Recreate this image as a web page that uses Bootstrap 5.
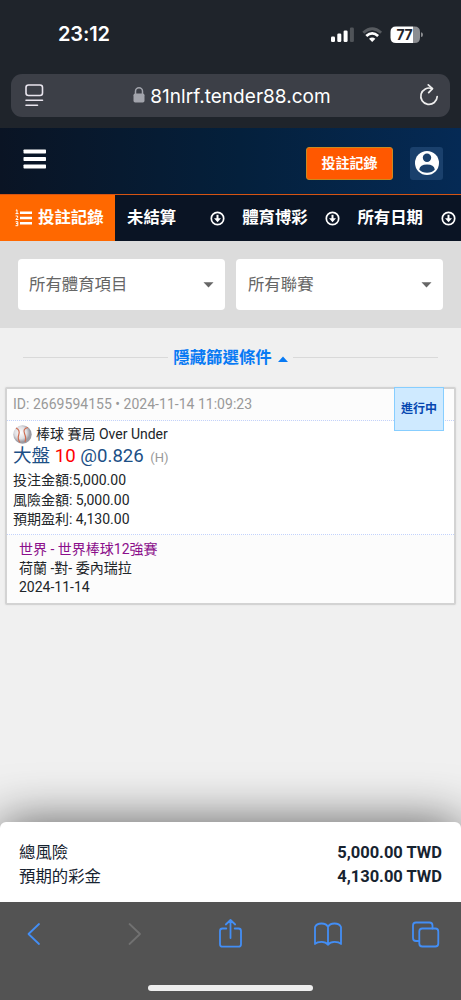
<!DOCTYPE html>
<html lang="zh-Hant">
<head>
<meta charset="utf-8">
<meta name="viewport" content="width=device-width, initial-scale=1">
<title>投註記錄</title>
<link rel="stylesheet" href="https://cdn.jsdelivr.net/npm/bootstrap@5.3.0/dist/css/bootstrap.min.css">
<style>
body{font-family:Roboto,"Noto Sans CJK TC",sans-serif;background:#f0f0f0;width:461px;height:1000px;overflow:hidden;color:#212529}
svg{display:block;flex:none}
.browser-top{height:128px;background:#1f242b;font-family:Inter,sans-serif;color:#fff}
.status-row{height:74px;padding:4px 37px 11px 58px}
.clock{font-size:20px;font-weight:600;letter-spacing:-.1px}
.address{margin:0 11px;height:43px;border-radius:11px;background:#3c3f47;padding:0 11px 0 14px}
.url{font-size:19px;letter-spacing:.03px;line-height:43px;margin-left:5px;padding-top:1px}
.app-head{height:66px;background:linear-gradient(90deg,#0a1424,#04203c 52%,#052a55);padding:0 18px 0 23px}
.btn-record{width:87px;height:33px;margin-top:4px;background:#ff5800;border:1px solid #c98a20;border-radius:3px;color:#fff;font-size:14px;font-weight:700;padding:0;line-height:31px}
.user-box{width:33px;height:33px;background:#1a406c;border-radius:3px;margin:4px 0 0 17px}
.tabs-bar{height:47px;background:#0a1424;border-top:1.5px solid #d55413;color:#fff;font-size:16.4px;font-weight:700;line-height:44px}
.tab-on{width:115px;background:#ff6800;padding-left:15px}
.tab-item{width:115.2px;padding:0 5px 0 12px}
.filters{height:87px;background:#dcdcdc;padding:18px 18px 0;gap:11px}
.filter{height:51px;border-radius:4px;background:#fff;font-size:16.4px;color:#666;padding:0 11px 0 11px;line-height:50px}
.filter + .filter{padding-left:12px}
.toggle-row{height:59px;padding:0 23px;color:#087af4;font-size:16.4px;font-weight:700;line-height:59px}
.rule{height:1px;background:#d9d9d9}
.ticket{margin:0 5px 0 5px;height:218px;border:2px solid #d3d3d3;border-radius:2px;background:#fff;font-size:14px;box-shadow:0 0 2px #ddd}
.ticket-id{height:32px;line-height:31px;padding-left:6px;background:#fcfcfc;border-bottom:1px dotted #c3d2fb;color:#999;letter-spacing:.02px}
.state{right:10px;top:-2px;width:50px;height:44px;background:#cfeaff;border:1px solid #87ceff;color:#0646b0;font-size:12px;font-weight:700;line-height:42px}
.bet{height:114px;padding:4px 0 0 6px;border-bottom:1px dotted #c3d2fb}
.ln{line-height:19px;height:19px;white-space:nowrap}
.odds{font-size:18.6px;line-height:25px;height:25px;color:#1c4f86}
.league{padding:5px 0 0 12px;height:68px;background:#fcfcfc}
.purple{color:#8b0f8b}
.gap-zone{height:217px}
.totals{height:80px;background:#fff;border-radius:6px 6px 0 0;box-shadow:0 0 50px rgba(0,0,0,.62);padding:19px 19px 0;color:#172330;font-size:16.4px;line-height:23.5px}
.totals b{font-size:16.5px}
.toolbar{height:98px;background:#535353}
.home-bar{width:165px;height:6px;border-radius:3px;background:#eee;margin:19px auto 0}
</style>
<script src="https://cdn.jsdelivr.net/npm/bootstrap@5.3.0/dist/js/bootstrap.bundle.min.js"></script>
</head>
<body>
<header class="browser-top">
 <div class="status-row d-flex align-items-center">
  <span class="clock me-auto">23:12</span>
  <svg width="96" height="20" viewBox="0 0 96 20"><g fill="#fff"><rect x="3" y="12.5" width="4" height="5.5" rx="1.3"/><rect x="9.3" y="9.5" width="4" height="8.5" rx="1.3"/><rect x="15.6" y="6.5" width="4" height="11.5" rx="1.3"/><rect x="21.9" y="3.5" width="4" height="14.5" rx="1.3" opacity=".22"/></g>
  <g fill="none" stroke="#fff" stroke-width="2.8"><path opacity=".25" d="M35.3 8.7Q44.2 .7 53.1 8.7"/><path d="M38.3 12Q44.2 6.7 50.1 12"/></g><path fill="#fff" d="M41 14.7Q44.2 12.1 47.4 14.7L44.2 18Z"/>
  <path fill="#fff" d="M68 2.5h17v16.5H68q-5.5 0-5.5-5.5V8q0-5.5 5.500-5.500z"/><path fill="#8b8d91" d="M85 2.500h1.500q5.500 0 5.500 5.500v5.500q0 5.500-5.500 5.500H85z"/><path fill="#8b8d91" d="M93 8.300q2 .3 2 2.400t-2 2.400z"/><text x="68.500" y="15.800" font-size="14" font-weight="700" letter-spacing="-.4" fill="#1f242b" font-family="Inter">77</text></svg>
 </div>
 <div class="address d-flex align-items-center">
  <svg width="20" height="24" viewBox="0 0 20 24" fill="none" stroke="#e9e5ee" stroke-width="1.600" stroke-linecap="round"><rect x="1" y="1" width="16.500" height="10.500" rx="2.500"/><path d="M1 16.200h16.500M1 21.200h11.500"/></svg>
  <svg class="ms-auto" width="12" height="17" viewBox="0 0 12 17"><path fill="none" stroke="#a2a4ac" stroke-width="1.500" d="M2.500 8V4.300a3.500 3.500 0 0 1 7 0V8"/><rect x=".5" y="6.500" width="11" height="9" rx="1.700" fill="#a2a4ac"/></svg>
  <span class="url me-auto">81nlrf.tender88.com</span>
  <svg width="20" height="24" viewBox="0 0 20 24" fill="none" stroke="#eee" stroke-width="1.700" stroke-linecap="round" stroke-linejoin="round"><path d="M18.200 12.500A8.200 8.200 0 1 1 13 4.600"/><path d="M9.300 .900L13.500 4.600 9.700 8.700"/></svg>
 </div>
</header>
<div class="app-head d-flex align-items-center">
 <svg class="me-auto" style="margin-top:-4px" width="24" height="20" viewBox="0 0 24 20" fill="#fff"><rect x=".5" y=".5" width="22.500" height="4" rx=".7"/><rect x=".5" y="8" width="22.500" height="4" rx=".7"/><rect x=".5" y="15.500" width="22.500" height="4" rx=".7"/></svg>
 <button class="btn btn-record">投註記錄</button>
 <span class="user-box d-flex align-items-center justify-content-center"><svg width="24" height="24" viewBox="0 0 24 24"><circle cx="12" cy="12" r="12" fill="#fff"/><circle cx="12" cy="6.800" r="4.200" fill="#1a406c"/><path fill="#1a406c" d="M4.200 18.400Q5 13.400 12 13.400T19.800 18.400Q17 21.700 12 21.700T4.200 18.400z"/></svg></span>
</div>
<nav class="tabs-bar d-flex text-nowrap">
 <div class="tab-on d-flex align-items-center"><svg width="18" height="18" viewBox="0 0 18 18" fill="#fff"><path d="M5 2.500h12v2.400H5zM5 7.800h12v2.400H5zM5 13.100h12v2.400H5z"/><g fill="none" stroke="#fff" stroke-width="1"><path d="M.8 1.500l1.200-.7v4M.5 4.600h3M.6 7h2v1.500l-1.700 2h2.500M.6 12.700h2.200v4H.5M1 14.600h1.800"/></g></svg><span style="margin-left:5px">投註記錄</span></div>
 <div class="tab-item d-flex align-items-center justify-content-between"><span>未結算</span><svg width="15" height="15" viewBox="0 0 15 15" fill="none" stroke="#fff" stroke-width="1.700"><circle cx="7.500" cy="7.500" r="6.200"/><path d="M7.500 3.800v5.200" stroke-width="2"/><path fill="#fff" stroke="none" d="M4 7.300h7L7.500 11.200z"/></svg></div>
 <div class="tab-item d-flex align-items-center justify-content-between"><span>體育博彩</span><svg width="15" height="15" viewBox="0 0 15 15" fill="none" stroke="#fff" stroke-width="1.700"><circle cx="7.500" cy="7.500" r="6.200"/><path d="M7.500 3.800v5.200" stroke-width="2"/><path fill="#fff" stroke="none" d="M4 7.300h7L7.500 11.200z"/></svg></div>
 <div class="tab-item d-flex align-items-center justify-content-between"><span>所有日期</span><svg width="15" height="15" viewBox="0 0 15 15" fill="none" stroke="#fff" stroke-width="1.700"><circle cx="7.500" cy="7.500" r="6.200"/><path d="M7.500 3.800v5.200" stroke-width="2"/><path fill="#fff" stroke="none" d="M4 7.300h7L7.500 11.200z"/></svg></div>
</nav>
<section class="filters d-flex">
 <div class="filter flex-fill w-50 d-flex align-items-center justify-content-between"><span>所有體育項目</span><svg width="11" height="6" viewBox="0 0 11 6"><path fill="#666" d="M.5.200h10L5.500 5.500z"/></svg></div>
 <div class="filter flex-fill w-50 d-flex align-items-center justify-content-between"><span>所有聯賽</span><svg width="11" height="6" viewBox="0 0 11 6"><path fill="#666" d="M.5.200h10L5.500 5.500z"/></svg></div>
</section>
<div class="toggle-row d-flex align-items-center">
 <span class="rule flex-fill"></span><span style="margin-left:5px">隱藏篩選條件</span><svg style="margin:2px 5px 0 6px" width="10" height="6" viewBox="0 0 10 6"><path fill="#087af4" d="M0 6h10L5 .500z"/></svg><span class="rule flex-fill"></span>
</div>
<article class="ticket position-relative">
 <div class="ticket-id">ID: 2669594155 • 2024-11-14 11:09:23</div>
 <div class="state position-absolute text-center">進行中</div>
 <div class="bet">
  <div class="ln d-flex align-items-center"><svg class="me-1" width="19" height="19" viewBox="0 0 19 19"><defs><radialGradient id="ball" cx=".4" cy=".4"><stop offset="0" stop-color="#fff"/><stop offset=".65" stop-color="#dedee2"/><stop offset="1" stop-color="#9c9ca4"/></radialGradient></defs><circle cx="9.500" cy="9.500" r="9.200" fill="url(#ball)"/><path fill="none" stroke="#cf6d52" stroke-width="1.200" d="M3 3Q7.300 5 5.800 9.500T7 17.500M15 2.500Q9.500 3.500 11.500 8.500T12 17"/></svg><span>棒球 賽局 Over Under</span></div>
  <div class="odds">大盤 <span style="color:#f00">10</span> @0.826 <small style="font-size:13px;color:#999;margin-left:2px">(H)</small></div>
  <div class="ln" style="height:22px;line-height:22px">投注金額:5,000.00</div>
  <div class="ln">風險金額: 5,000.00</div>
  <div class="ln">預期盈利: 4,130.00</div>
 </div>
 <div class="league">
  <div class="ln purple">世界 - 世界棒球12強賽</div>
  <div class="ln">荷蘭 -對- 委內瑞拉</div>
  <div class="ln">2024-11-14</div>
 </div>
</article>
<div class="gap-zone"></div>
<section class="totals">
 <div class="d-flex justify-content-between"><span>總風險</span><b>5,000.00 TWD</b></div>
 <div class="d-flex justify-content-between"><span>預期的彩金</span><b>4,130.00 TWD</b></div>
</section>
<footer class="toolbar position-relative pt-3">
 <svg width="461" height="48" viewBox="0 0 461 48" fill="none" stroke="#438ef5" stroke-width="1.800" stroke-linecap="round" stroke-linejoin="round">
  <path d="M39 6L28.500 16 39 26"/><path stroke="#717171" d="M129.500 6L140 16 129.500 26"/>
  <path d="M226.300 10.500h-3.800q-2.500 0-2.500 2.500v13.200q0 2.500 2.500 2.500h16q2.500 0 2.500-2.500V13q0-2.500-2.500-2.500h-3.800M230.500 20V2.500M225.800 6.500l4.700-4.500 4.700 4.500"/>
  <path d="M328 9v17.700M328 9Q326.500 5.500 321.500 5.500T315 9V26Q317 23.800 321.500 23.800T328 26.700Q330 23.800 334.500 23.800T341 26V9Q339.500 5.500 334.500 5.500T328 9"/>
  <path d="M419.300 23H416q-3 0-3-3V7.500q0-3 3-3h13.500q3 0 3 3v3"/><rect x="419.300" y="10.500" width="19" height="18" rx="3"/>
 </svg>
 <div class="home-bar"></div>
</footer>
</body>
</html>
